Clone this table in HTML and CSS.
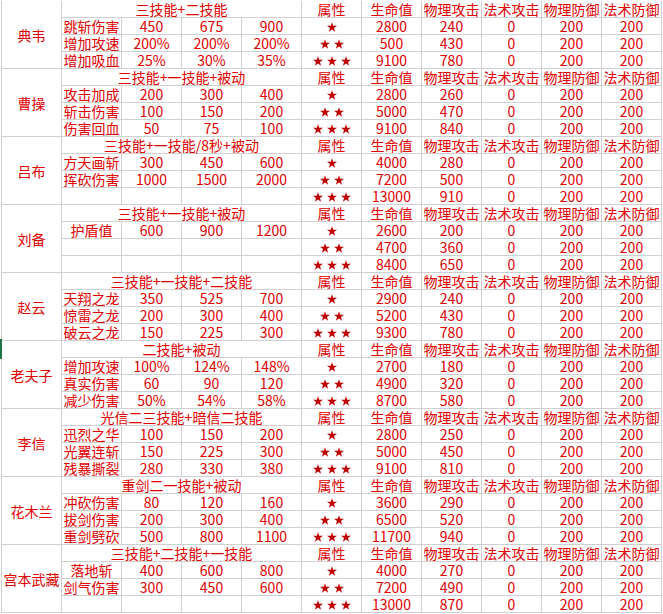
FILE: index.html
```html
<!DOCTYPE html>
<html lang="zh">
<head>
<meta charset="utf-8">
<title>英雄属性表</title>
<link rel="stylesheet" href="styles.css">
</head>
<body>
<svg width="0" height="0" class="defs"><defs><polygon id="star" points="5,0.2 6.25,3.7 10,3.8 7,6.1 8.1,9.8 5,7.6 1.9,9.8 3,6.1 0,3.8 3.75,3.7"/></defs></svg>
<div class="sheet">
  <!-- 典韦 -->
  <div class="c name">典韦</div>
  <div class="c sk">三技能+二技能</div>
  <div class="c">属性</div><div class="c">生命值</div><div class="c">物理攻击</div><div class="c">法术攻击</div><div class="c">物理防御</div><div class="c">法术防御</div>
  <div class="c">跳斩伤害</div><div class="c">450</div><div class="c">675</div><div class="c">900</div>
  <div class="c st"><svg class="s" viewBox="0 0 10 10"><use href="#star"/></svg></div><div class="c">2800</div><div class="c">240</div><div class="c">0</div><div class="c">200</div><div class="c">200</div>
  <div class="c">增加攻速</div><div class="c">200%</div><div class="c">200%</div><div class="c">200%</div>
  <div class="c st"><svg class="s" viewBox="0 0 10 10"><use href="#star"/></svg><svg class="s" viewBox="0 0 10 10"><use href="#star"/></svg></div><div class="c">500</div><div class="c">430</div><div class="c">0</div><div class="c">200</div><div class="c">200</div>
  <div class="c">增加吸血</div><div class="c">25%</div><div class="c">30%</div><div class="c">35%</div>
  <div class="c st"><svg class="s" viewBox="0 0 10 10"><use href="#star"/></svg><svg class="s" viewBox="0 0 10 10"><use href="#star"/></svg><svg class="s" viewBox="0 0 10 10"><use href="#star"/></svg></div><div class="c">9100</div><div class="c">780</div><div class="c">0</div><div class="c">200</div><div class="c">200</div>

  <!-- 曹操 -->
  <div class="c name">曹操</div>
  <div class="c sk">三技能+一技能+被动</div>
  <div class="c">属性</div><div class="c">生命值</div><div class="c">物理攻击</div><div class="c">法术攻击</div><div class="c">物理防御</div><div class="c">法术防御</div>
  <div class="c">攻击加成</div><div class="c">200</div><div class="c">300</div><div class="c">400</div>
  <div class="c st"><svg class="s" viewBox="0 0 10 10"><use href="#star"/></svg></div><div class="c">2800</div><div class="c">260</div><div class="c">0</div><div class="c">200</div><div class="c">200</div>
  <div class="c">斩击伤害</div><div class="c">100</div><div class="c">150</div><div class="c">200</div>
  <div class="c st"><svg class="s" viewBox="0 0 10 10"><use href="#star"/></svg><svg class="s" viewBox="0 0 10 10"><use href="#star"/></svg></div><div class="c">5000</div><div class="c">470</div><div class="c">0</div><div class="c">200</div><div class="c">200</div>
  <div class="c">伤害回血</div><div class="c">50</div><div class="c">75</div><div class="c">100</div>
  <div class="c st"><svg class="s" viewBox="0 0 10 10"><use href="#star"/></svg><svg class="s" viewBox="0 0 10 10"><use href="#star"/></svg><svg class="s" viewBox="0 0 10 10"><use href="#star"/></svg></div><div class="c">9100</div><div class="c">840</div><div class="c">0</div><div class="c">200</div><div class="c">200</div>

  <!-- 吕布 -->
  <div class="c name">吕布</div>
  <div class="c sk">三技能+一技能/8秒+被动</div>
  <div class="c">属性</div><div class="c">生命值</div><div class="c">物理攻击</div><div class="c">法术攻击</div><div class="c">物理防御</div><div class="c">法术防御</div>
  <div class="c">方天画斩</div><div class="c">300</div><div class="c">450</div><div class="c">600</div>
  <div class="c st"><svg class="s" viewBox="0 0 10 10"><use href="#star"/></svg></div><div class="c">4000</div><div class="c">280</div><div class="c">0</div><div class="c">200</div><div class="c">200</div>
  <div class="c">挥砍伤害</div><div class="c">1000</div><div class="c">1500</div><div class="c">2000</div>
  <div class="c st"><svg class="s" viewBox="0 0 10 10"><use href="#star"/></svg><svg class="s" viewBox="0 0 10 10"><use href="#star"/></svg></div><div class="c">7200</div><div class="c">500</div><div class="c">0</div><div class="c">200</div><div class="c">200</div>
  <div class="c"></div><div class="c"></div><div class="c"></div><div class="c"></div>
  <div class="c st"><svg class="s" viewBox="0 0 10 10"><use href="#star"/></svg><svg class="s" viewBox="0 0 10 10"><use href="#star"/></svg><svg class="s" viewBox="0 0 10 10"><use href="#star"/></svg></div><div class="c">13000</div><div class="c">910</div><div class="c">0</div><div class="c">200</div><div class="c">200</div>

  <!-- 刘备 -->
  <div class="c name">刘备</div>
  <div class="c sk">三技能+一技能+被动</div>
  <div class="c">属性</div><div class="c">生命值</div><div class="c">物理攻击</div><div class="c">法术攻击</div><div class="c">物理防御</div><div class="c">法术防御</div>
  <div class="c">护盾值</div><div class="c">600</div><div class="c">900</div><div class="c">1200</div>
  <div class="c st"><svg class="s" viewBox="0 0 10 10"><use href="#star"/></svg></div><div class="c">2600</div><div class="c">200</div><div class="c">0</div><div class="c">200</div><div class="c">200</div>
  <div class="c"></div><div class="c"></div><div class="c"></div><div class="c"></div>
  <div class="c st"><svg class="s" viewBox="0 0 10 10"><use href="#star"/></svg><svg class="s" viewBox="0 0 10 10"><use href="#star"/></svg></div><div class="c">4700</div><div class="c">360</div><div class="c">0</div><div class="c">200</div><div class="c">200</div>
  <div class="c"></div><div class="c"></div><div class="c"></div><div class="c"></div>
  <div class="c st"><svg class="s" viewBox="0 0 10 10"><use href="#star"/></svg><svg class="s" viewBox="0 0 10 10"><use href="#star"/></svg><svg class="s" viewBox="0 0 10 10"><use href="#star"/></svg></div><div class="c">8400</div><div class="c">650</div><div class="c">0</div><div class="c">200</div><div class="c">200</div>

  <!-- 赵云 -->
  <div class="c name">赵云</div>
  <div class="c sk">三技能+一技能+二技能</div>
  <div class="c">属性</div><div class="c">生命值</div><div class="c">物理攻击</div><div class="c">法术攻击</div><div class="c">物理防御</div><div class="c">法术防御</div>
  <div class="c">天翔之龙</div><div class="c">350</div><div class="c">525</div><div class="c">700</div>
  <div class="c st"><svg class="s" viewBox="0 0 10 10"><use href="#star"/></svg></div><div class="c">2900</div><div class="c">240</div><div class="c">0</div><div class="c">200</div><div class="c">200</div>
  <div class="c">惊雷之龙</div><div class="c">200</div><div class="c">300</div><div class="c">400</div>
  <div class="c st"><svg class="s" viewBox="0 0 10 10"><use href="#star"/></svg><svg class="s" viewBox="0 0 10 10"><use href="#star"/></svg></div><div class="c">5200</div><div class="c">430</div><div class="c">0</div><div class="c">200</div><div class="c">200</div>
  <div class="c">破云之龙</div><div class="c">150</div><div class="c">225</div><div class="c">300</div>
  <div class="c st"><svg class="s" viewBox="0 0 10 10"><use href="#star"/></svg><svg class="s" viewBox="0 0 10 10"><use href="#star"/></svg><svg class="s" viewBox="0 0 10 10"><use href="#star"/></svg></div><div class="c">9300</div><div class="c">780</div><div class="c">0</div><div class="c">200</div><div class="c">200</div>

  <!-- 老夫子 -->
  <div class="c name">老夫子</div>
  <div class="c sk">二技能+被动</div>
  <div class="c">属性</div><div class="c">生命值</div><div class="c">物理攻击</div><div class="c">法术攻击</div><div class="c">物理防御</div><div class="c">法术防御</div>
  <div class="c">增加攻速</div><div class="c">100%</div><div class="c">124%</div><div class="c">148%</div>
  <div class="c st"><svg class="s" viewBox="0 0 10 10"><use href="#star"/></svg></div><div class="c">2700</div><div class="c">180</div><div class="c">0</div><div class="c">200</div><div class="c">200</div>
  <div class="c">真实伤害</div><div class="c">60</div><div class="c">90</div><div class="c">120</div>
  <div class="c st"><svg class="s" viewBox="0 0 10 10"><use href="#star"/></svg><svg class="s" viewBox="0 0 10 10"><use href="#star"/></svg></div><div class="c">4900</div><div class="c">320</div><div class="c">0</div><div class="c">200</div><div class="c">200</div>
  <div class="c">减少伤害</div><div class="c">50%</div><div class="c">54%</div><div class="c">58%</div>
  <div class="c st"><svg class="s" viewBox="0 0 10 10"><use href="#star"/></svg><svg class="s" viewBox="0 0 10 10"><use href="#star"/></svg><svg class="s" viewBox="0 0 10 10"><use href="#star"/></svg></div><div class="c">8700</div><div class="c">580</div><div class="c">0</div><div class="c">200</div><div class="c">200</div>

  <!-- 李信 -->
  <div class="c name">李信</div>
  <div class="c sk">光信二三技能+暗信二技能</div>
  <div class="c">属性</div><div class="c">生命值</div><div class="c">物理攻击</div><div class="c">法术攻击</div><div class="c">物理防御</div><div class="c">法术防御</div>
  <div class="c">迅烈之华</div><div class="c">100</div><div class="c">150</div><div class="c">200</div>
  <div class="c st"><svg class="s" viewBox="0 0 10 10"><use href="#star"/></svg></div><div class="c">2800</div><div class="c">250</div><div class="c">0</div><div class="c">200</div><div class="c">200</div>
  <div class="c">光翼连斩</div><div class="c">150</div><div class="c">225</div><div class="c">300</div>
  <div class="c st"><svg class="s" viewBox="0 0 10 10"><use href="#star"/></svg><svg class="s" viewBox="0 0 10 10"><use href="#star"/></svg></div><div class="c">5000</div><div class="c">450</div><div class="c">0</div><div class="c">200</div><div class="c">200</div>
  <div class="c">残暴撕裂</div><div class="c">280</div><div class="c">330</div><div class="c">380</div>
  <div class="c st"><svg class="s" viewBox="0 0 10 10"><use href="#star"/></svg><svg class="s" viewBox="0 0 10 10"><use href="#star"/></svg><svg class="s" viewBox="0 0 10 10"><use href="#star"/></svg></div><div class="c">9100</div><div class="c">810</div><div class="c">0</div><div class="c">200</div><div class="c">200</div>

  <!-- 花木兰 -->
  <div class="c name">花木兰</div>
  <div class="c sk">重剑二一技能+被动</div>
  <div class="c">属性</div><div class="c">生命值</div><div class="c">物理攻击</div><div class="c">法术攻击</div><div class="c">物理防御</div><div class="c">法术防御</div>
  <div class="c">冲砍伤害</div><div class="c">80</div><div class="c">120</div><div class="c">160</div>
  <div class="c st"><svg class="s" viewBox="0 0 10 10"><use href="#star"/></svg></div><div class="c">3600</div><div class="c">290</div><div class="c">0</div><div class="c">200</div><div class="c">200</div>
  <div class="c">拔剑伤害</div><div class="c">200</div><div class="c">300</div><div class="c">400</div>
  <div class="c st"><svg class="s" viewBox="0 0 10 10"><use href="#star"/></svg><svg class="s" viewBox="0 0 10 10"><use href="#star"/></svg></div><div class="c">6500</div><div class="c">520</div><div class="c">0</div><div class="c">200</div><div class="c">200</div>
  <div class="c">重剑劈砍</div><div class="c">500</div><div class="c">800</div><div class="c">1100</div>
  <div class="c st"><svg class="s" viewBox="0 0 10 10"><use href="#star"/></svg><svg class="s" viewBox="0 0 10 10"><use href="#star"/></svg><svg class="s" viewBox="0 0 10 10"><use href="#star"/></svg></div><div class="c">11700</div><div class="c">940</div><div class="c">0</div><div class="c">200</div><div class="c">200</div>

  <!-- 宫本武藏 -->
  <div class="c name">宫本武藏</div>
  <div class="c sk">三技能+二技能+一技能</div>
  <div class="c">属性</div><div class="c">生命值</div><div class="c">物理攻击</div><div class="c">法术攻击</div><div class="c">物理防御</div><div class="c">法术防御</div>
  <div class="c">落地斩</div><div class="c">400</div><div class="c">600</div><div class="c">800</div>
  <div class="c st"><svg class="s" viewBox="0 0 10 10"><use href="#star"/></svg></div><div class="c">4000</div><div class="c">270</div><div class="c">0</div><div class="c">200</div><div class="c">200</div>
  <div class="c">剑气伤害</div><div class="c">300</div><div class="c">450</div><div class="c">600</div>
  <div class="c st"><svg class="s" viewBox="0 0 10 10"><use href="#star"/></svg><svg class="s" viewBox="0 0 10 10"><use href="#star"/></svg></div><div class="c">7200</div><div class="c">490</div><div class="c">0</div><div class="c">200</div><div class="c">200</div>
  <div class="c"></div><div class="c"></div><div class="c"></div><div class="c"></div>
  <div class="c st"><svg class="s" viewBox="0 0 10 10"><use href="#star"/></svg><svg class="s" viewBox="0 0 10 10"><use href="#star"/></svg><svg class="s" viewBox="0 0 10 10"><use href="#star"/></svg></div><div class="c">13000</div><div class="c">870</div><div class="c">0</div><div class="c">200</div><div class="c">200</div>

  <div class="mark"></div>
</div>
</body>
</html>
```
FILE: styles.css
```css
html, body {
  margin: 0;
  padding: 0;
  background: #ffffff;
}
.defs {
  position: absolute;
}
.sheet {
  position: relative;
  margin-left: 1px;
  width: 661px;
  box-sizing: border-box;
  display: grid;
  grid-template-columns: repeat(11, 59px);
  grid-auto-rows: 16px;
  gap: 1px;
  padding: 0 1px 1px 1px;
  border-top: 1px solid #ffffff;
  background: #d0d0d0;
  font-family: "Noto Sans CJK SC", "Noto Sans", sans-serif;
  font-size: 14px;
  color: #e20000;
}
.c {
  background: #ffffff;
  display: flex;
  align-items: center;
  justify-content: center;
  white-space: nowrap;
  line-height: 16px;
  overflow: visible;
}
.name {
  grid-row: span 4;
}
.sk {
  grid-column: span 4;
}
.st {
  gap: 4px;
  padding-top: 1px;
}
.s {
  width: 10px;
  height: 10px;
  fill: #c00000;
}
.mark {
  position: absolute;
  left: -1px;
  top: 338px;
  width: 2px;
  height: 20px;
  background: #217346;
}
```
